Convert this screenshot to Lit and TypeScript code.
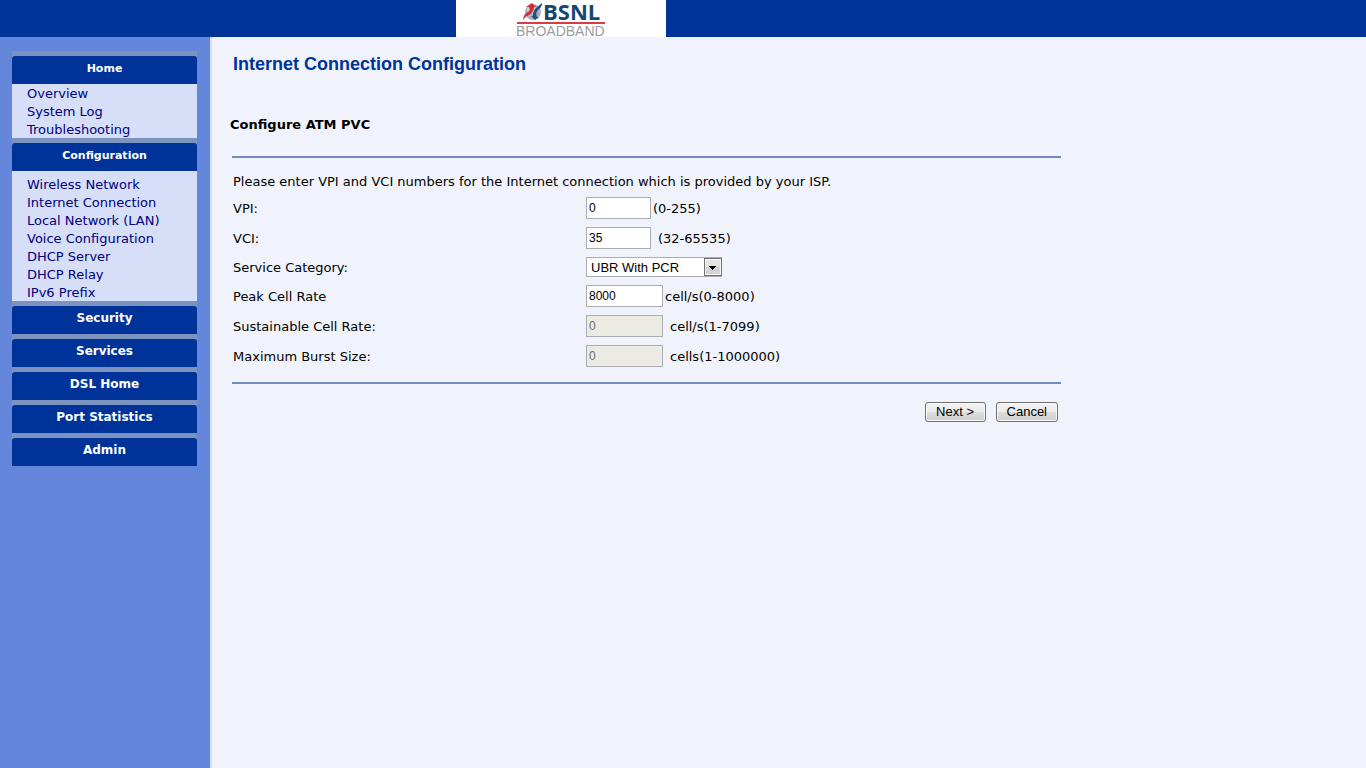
import { LitElement, html, css, nothing } from "lit";
import { customElement, property } from "lit/decorators.js";
import { classMap } from "lit/directives/class-map.js";

interface Section {
  title: string;
  links?: string[];
  roomy?: boolean;
}

const SECTIONS: Section[] = [
  { title: "Home", links: ["Overview", "System Log", "Troubleshooting"] },
  {
    title: "Configuration",
    roomy: true,
    links: [
      "Wireless Network",
      "Internet Connection",
      "Local Network (LAN)",
      "Voice Configuration",
      "DHCP Server",
      "DHCP Relay",
      "IPv6 Prefix",
    ],
  },
  { title: "Security" },
  { title: "Services" },
  { title: "DSL Home" },
  { title: "Port Statistics" },
  { title: "Admin" },
];

@customElement("brand-bar")
class BrandBar extends LitElement {
  static styles = css`
    :host {
      display: block;
      background: #003399;
      padding-left: 33.4%;
    }
    .plate {
      display: block;
      width: 210px;
      height: 37px;
      background: #fff;
      overflow: visible;
    }
    .name {
      font: bold 22px "Open Sans", "Noto Sans", sans-serif;
      fill: #17466e;
    }
    .sub {
      font: 14px "Liberation Sans", Arial, sans-serif;
      fill: #9c9c9e;
    }
  `;
  render() {
    return html`
      <svg class="plate" viewBox="0 0 210 37" role="img" aria-label="BSNL Broadband">
        <circle cx="77" cy="12" r="8" fill="#aeb2be" />
        <circle cx="75" cy="9" r="4" fill="#d3d5dc" />
        <path d="M67 20 C67 16 69 14 72 12 C74 11 74 9 73 7 L70 7 L76 3 L80 7 L78 7 C78 11 76 13 73 15 C71 16 69 17 67 20Z" fill="#cf2f36" />
        <path d="M86 3 C86 7 84 8 82 10 C80 12 80 14 81 17 L83 17 L79 20 L75 16 L77 16 C77 12 78 10 80 8 C82 6 84 5 86 3Z" fill="#24507c" />
        <text class="name" x="87" y="20">BSNL</text>
        <rect x="61" y="22" width="88" height="2" fill="#dc3a44" />
        <text class="sub" x="60" y="36">BROADBAND</text>
      </svg>
    `;
  }
}

@customElement("side-menu")
class SideMenu extends LitElement {
  @property({ attribute: false }) sections: Section[] = [];

  static styles = css`
    :host {
      display: block;
      box-sizing: border-box;
      width: 212px;
      padding: 14px 13px 14px 12px;
      background: #6487dc;
      border-right: 2px solid #d6dff7;
      font: 13px/18px "DejaVu Sans", Verdana, sans-serif;
    }
    .band {
      background: #7b93bf;
      padding-top: 5px;
    }
    .head {
      display: block;
      box-sizing: border-box;
      width: 100%;
      height: 28px;
      padding: 0 0 4px;
      border: 0;
      border-radius: 3px 3px 0 0;
      background: #003399;
      color: #fff;
      font: bold 12px/24px "DejaVu Sans", Verdana, sans-serif;
      text-align: center;
    }
    .open {
      padding-bottom: 2px;
      font-size: 11px;
    }
    .links {
      height: 53px;
      margin: 0;
      padding: 1px 15px 0;
      list-style: none;
      background: #d6dff7;
    }
    .roomy {
      height: 125px;
      padding-top: 5px;
    }
    .link {
      display: block;
      color: #000080;
      text-decoration: none;
      white-space: nowrap;
    }
  `;
  render() {
    return html`<nav>
      ${this.sections.map(
        (s) => html`
          <div class="band">
            <button class=${classMap({ head: true, open: !!s.links })} type="button">${s.title}</button>
          </div>
          ${s.links
            ? html`<ul class=${classMap({ links: true, roomy: !!s.roomy })}>
                ${s.links.map((l) => html`<li><a class="link" href="#">${l}</a></li>`)}
              </ul>`
            : nothing}
        `
      )}
    </nav>`;
  }
}

@customElement("pvc-form")
class PvcForm extends LitElement {
  static styles = css`
    :host {
      display: block;
      max-width: 829px;
      font: 13px/18px "DejaVu Sans", Verdana, sans-serif;
      color: #000;
    }
    .fields {
      border-top: 2px solid #7389c4;
      border-bottom: 2px solid #7389c4;
      padding: 15px 0 15px 1px;
    }
    .intro {
      margin: 0 0 6px;
    }
    .rows {
      display: grid;
      gap: 8px;
    }
    .row {
      display: grid;
      grid-template-columns: 353px 1fr;
      align-items: center;
    }
    .row label,
    .hint {
      padding-top: 2px;
    }
    .value {
      display: flex;
      align-items: center;
      gap: 2px;
    }
    .apart {
      gap: 7px;
    }
    .box {
      box-sizing: border-box;
      width: 65px;
      height: 22px;
      padding: 0 2px;
      border: 1px solid #abadb3;
      border-radius: 0;
      background: #fff;
      color: #000;
      font: 12px "Liberation Sans", Arial, sans-serif;
    }
    .wide {
      width: 77px;
    }
    .box:disabled {
      background: #ebebe4;
      color: #6d6d6d;
    }
    .picker {
      position: relative;
      display: flex;
    }
    .choice {
      appearance: none;
      width: 136px;
      height: 20px;
      padding: 0 20px 0 4px;
      border: 1px solid #abadb3;
      border-radius: 0;
      background: #fff;
      color: #000;
      font: 13px "Liberation Sans", Arial, sans-serif;
    }
    .arrow {
      position: absolute;
      top: 1px;
      right: 0;
      width: 18px;
      height: 18px;
      pointer-events: none;
    }
    .actions {
      display: flex;
      justify-content: flex-end;
      gap: 10px;
      padding: 18px 3px;
    }
    .push {
      box-sizing: border-box;
      min-width: 61px;
      height: 20px;
      padding: 0 10px;
      border: 1px solid #707070;
      border-radius: 3px;
      background: linear-gradient(#f2f2f2 0, #ebebeb 50%, #dddddd 50%, #cfcfcf 100%);
      box-shadow: inset 0 0 0 1px #fafafa;
      color: #000;
      font: 13px/18px "Liberation Sans", Arial, sans-serif;
    }
  `;

  private field(id: string, label: string, value: string, hint: string, opts: { wide?: boolean; apart?: boolean; off?: boolean } = {}) {
    return html`<div class="row">
      <label for=${id}>${label}</label>
      <div class=${classMap({ value: true, apart: !!opts.apart })}>
        <input id=${id} class=${classMap({ box: true, wide: !!opts.wide })} type="text" .value=${value} ?disabled=${!!opts.off} />
        <span class="hint">${hint}</span>
      </div>
    </div>`;
  }

  render() {
    return html`<form>
      <div class="fields">
        <p class="intro">Please enter VPI and VCI numbers for the Internet connection which is provided by your ISP.</p>
        <div class="rows">
          ${this.field("vpi", "VPI:", "0", "(0-255)")}
          ${this.field("vci", "VCI:", "35", "(32-65535)", { apart: true })}
          <div class="row">
            <label for="category">Service Category:</label>
            <div class="value">
              <span class="picker">
                <select id="category" class="choice">
                  <option>UBR With PCR</option>
                </select>
                <svg class="arrow" viewBox="0 0 18 18" aria-hidden="true">
                  <rect x="0.5" y="0.5" width="17" height="17" fill="#e4e4e4" stroke="#707070" />
                  <rect x="1.5" y="1.5" width="15" height="15" fill="none" stroke="#f8f8f8" />
                  <rect x="2" y="9" width="14" height="7" fill="#d4d4d4" />
                  <path d="M5 8h7v1h-1v1h-1v1h-1v1h-1v-1h-1v-1h-1v-1h-1z" fill="#000" />
                </svg>
              </span>
            </div>
          </div>
          ${this.field("pcr", "Peak Cell Rate", "8000", "cell/s(0-8000)", { wide: true })}
          ${this.field("scr", "Sustainable Cell Rate:", "0", "cell/s(1-7099)", { wide: true, apart: true, off: true })}
          ${this.field("mbs", "Maximum Burst Size:", "0", "cells(1-1000000)", { wide: true, apart: true, off: true })}
        </div>
      </div>
      <div class="actions">
        <button class="push" type="button">Next &gt;</button>
        <button class="push" type="button">Cancel</button>
      </div>
    </form>`;
  }
}

@customElement("app-root")
class AppRoot extends LitElement {
  static styles = css`
    :host {
      display: flex;
      flex-direction: column;
      min-height: 100vh;
      background: #f0f3fb;
    }
    .body {
      flex: 1;
      display: flex;
    }
    .menu {
      flex: none;
    }
    .main {
      flex: 1;
      padding: 16px 20px;
    }
    .title {
      margin: 0 1px;
      color: #003399;
      font: bold 18px/22px "Liberation Sans", Arial, sans-serif;
    }
    .section {
      margin: 41px 0 22px -2px;
      color: #000;
      font: bold 13px/18px "DejaVu Sans", Verdana, sans-serif;
    }
  `;
  render() {
    return html`
      <brand-bar></brand-bar>
      <div class="body">
        <side-menu class="menu" .sections=${SECTIONS}></side-menu>
        <main class="main">
          <h1 class="title">Internet Connection Configuration</h1>
          <h2 class="section">Configure ATM PVC</h2>
          <pvc-form></pvc-form>
        </main>
      </div>
    `;
  }
}
